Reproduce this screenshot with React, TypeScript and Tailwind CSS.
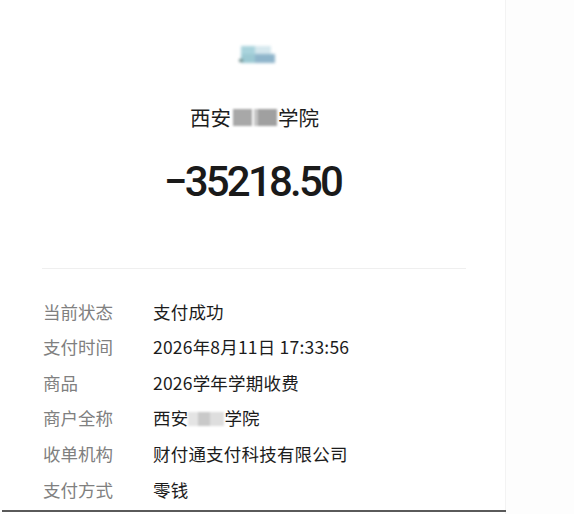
import React from "react";

const cjk = { fontFamily: '"Noto Sans CJK SC", "Noto Sans", sans-serif' };
const num = { fontFamily: 'Roboto, "Noto Sans CJK SC", sans-serif' };

function Row({ label, children }: { label: string; children: React.ReactNode }) {
  return (
    <div className="flex h-[35.6px] items-center">
      <div className="w-[110px] shrink-0 text-[17.5px] text-[#808080]" style={cjk}>
        {label}
      </div>
      <div className="text-[17.5px] tracking-[0.2px] text-[#1c1c1c]" style={cjk}>
        {children}
      </div>
    </div>
  );
}

export default function App() {
  return (
    <div className="flex h-[514px] w-[574px] overflow-hidden bg-[#fdfdfd]">
      <div className="flex h-[514px] w-[506px] shrink-0 flex-col border-r border-[#f3f3f3] bg-white">
        <div className="flex flex-col items-center pt-[44px]">
          {/* blurred logo */}
          <div className="relative ml-[10px] h-[22px] w-[38px] blur-[1.5px]">
            <div className="absolute left-[2px] top-[2px] h-[8px] w-[14px] bg-[#a9d3dc]" />
            <div className="absolute left-[16px] top-[2px] h-[8px] w-[16px] bg-[#d6e8ee]" />
            <div className="absolute left-[2px] top-[10px] h-[9px] w-[14px] bg-[#9cc9d3]" />
            <div className="absolute left-[16px] top-[10px] h-[9px] w-[20px] bg-[#8fb5cb]" />
            <div className="absolute left-[0px] top-[15px] h-[3px] w-[4px] bg-[#6f8f8f]" />
          </div>
          <div className="ml-[4px] mt-[37px] flex h-[28px] items-center text-[20.5px] text-[#1e1e1e]" style={cjk}>
            <span>西安</span>
            <span className="flex h-[20px] items-center blur-[0.8px]">
              <span className="mx-[2px] h-[17px] w-[19px] bg-[#a8a8a8]" />
              <span className="h-[17px] w-[4px] bg-[#c4c4c4]" />
              <span className="h-[17px] w-[19px] bg-[#a0a0a0]" />
            </span>
            <span className="ml-[1px]">学院</span>
          </div>
          <div
            className="mt-[27px] h-[48px] text-[42px] font-medium leading-[48px] tracking-[-2.8px] text-[#1a1a1a]"
            style={num}
          >
            −35218.50
          </div>
        </div>
        <div className="mx-[42px] mt-[62px] h-px w-[424px] bg-[#efefef]" />
        <div className="mt-[25px] flex flex-col pl-[43px]">
          <Row label="当前状态">支付成功</Row>
          <Row label="支付时间">2026年8月11日 17:33:56</Row>
          <Row label="商品">2026学年学期收费</Row>
          <Row label="商户全称">
            <span className="flex items-center">
              西安
              <span className="flex h-[16px] items-center blur-[1px]">
                <span className="h-[14px] w-[10px] bg-[#e4e4e4]" />
                <span className="h-[14px] w-[12px] bg-[#c9c9c9]" />
                <span className="h-[14px] w-[14px] bg-[#dedede]" />
              </span>
              学院
            </span>
          </Row>
          <Row label="收单机构">财付通支付科技有限公司</Row>
          <Row label="支付方式">零钱</Row>
        </div>
        <div className="flex-1" />
        <div className="mb-[2px] ml-[2px] h-[2px] w-[504px] bg-[#5a5a5a]" />
      </div>
    </div>
  );
}
